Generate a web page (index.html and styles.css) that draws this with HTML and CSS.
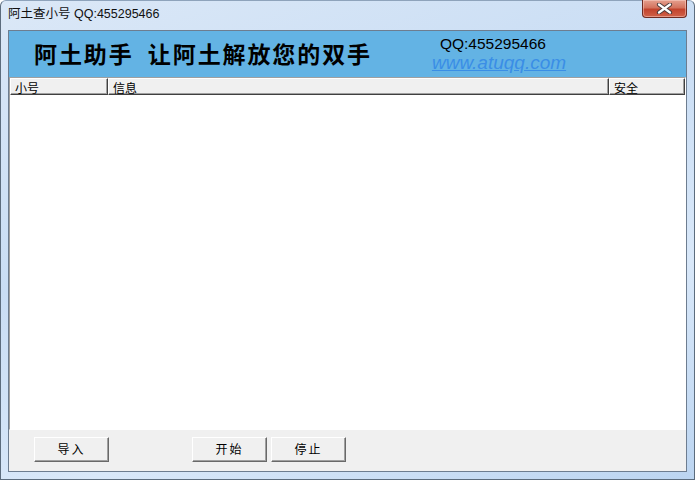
FILE: index.html
```html
<!DOCTYPE html>
<html lang="zh-cmn-Hans">
<head>
    <meta charset="UTF-8">
    <title>阿土查小号 QQ:455295466</title>
    <link rel="stylesheet" href="styles.css">
</head>
<body>
<div class="window">
    <div class="titlebar">
        <span class="title">阿土查小号 QQ:455295466</span>
        <a href="javascript:" class="btn-close">
            <svg width="17" height="11" viewBox="0 0 17 11">
                <path d="M3 1.5 L14 9.5 M14 1.5 L3 9.5" stroke="#4a3a3a" stroke-width="4.2" stroke-linecap="round"/>
                <path d="M3 1.5 L14 9.5 M14 1.5 L3 9.5" stroke="#fff" stroke-width="2.2" stroke-linecap="round"/>
            </svg>
        </a>
    </div>
    <div class="client">
        <div class="banner">
            <h1 class="banner-title">阿土助手&nbsp;&nbsp;让阿土解放您的双手</h1>
            <div class="contact">
                <div class="contact-qq">QQ:455295466</div>
                <a href="javascript:" class="contact-link">www.atuqq.com</a>
            </div>
        </div>
        <div class="list">
            <div class="list-head">
                <div class="list-col col-name">小号</div>
                <div class="list-col col-info">信息</div>
                <div class="list-col col-safe">安全</div>
            </div>
            <div class="list-body"></div>
        </div>
        <div class="footer">
            <a href="javascript:" class="btn btn-import">导入</a>
            <a href="javascript:" class="btn btn-start">开始</a>
            <a href="javascript:" class="btn">停止</a>
        </div>
    </div>
</div>
</body>
</html>
```

FILE: styles.css
```css
html, body {
    margin: 0;
    padding: 0;
    background: #fff;
}
body {
    font-family: "Noto Sans CJK SC", "Liberation Sans", sans-serif;
    font-size: 12px;
    color: #000;
}
a {
    text-decoration: none;
    color: inherit;
}
.window {
    width: 695px;
    height: 480px;
    box-sizing: border-box;
    display: flex;
    flex-direction: column;
    padding: 0 7px 7px 7px;
    background: linear-gradient(160deg, #dbe8f7 0%, #c9ddf4 40%, #d9e8f9 70%, #bcd5f1 100%);
    border: 1px solid #5c6c7d;
    border-top-color: #8ea3bb;
    border-radius: 6px 6px 0 0;
}
.titlebar {
    height: 29px;
    display: flex;
    justify-content: space-between;
    align-items: flex-start;
    flex-shrink: 0;
}
.title {
    margin-top: 5px;
    line-height: 16px;
    font-family: "Liberation Sans", "Noto Sans CJK SC", sans-serif;
    font-size: 12.5px;
    color: #111;
}
.btn-close {
    display: flex;
    align-items: center;
    justify-content: center;
    width: 43px;
    height: 17px;
    margin-top: -1px;
    border: 1px solid #6e2b22;
    border-top: none;
    border-radius: 0 0 4px 4px;
    background: linear-gradient(#e5a08f 0%, #d4735e 45%, #c2432d 55%, #d06249 100%);
    box-shadow: inset 0 0 0 1px rgba(255, 220, 210, .45);
}
.client {
    flex: 1;
    display: flex;
    flex-direction: column;
    background: #f0f0f0;
    border: 1px solid #6d7d90;
    min-height: 0;
}
.banner {
    height: 46px;
    flex-shrink: 0;
    display: flex;
    align-items: flex-start;
    background: #63b3e4;
    padding-left: 25px;
}
.banner-title {
    margin: 7px 0 0 0;
    font-size: 23px;
    line-height: 30px;
    font-weight: bold;
    letter-spacing: 1.9px;
    color: #000;
    white-space: nowrap;
}
.contact {
    margin-left: 60px;
    margin-top: 4px;
}
.contact-qq {
    padding-left: 8px;
    font-family: "Liberation Sans", sans-serif;
    font-size: 15.5px;
    line-height: 18px;
    color: #000;
}
.contact-link {
    display: block;
    font-family: "Liberation Sans", sans-serif;
    font-size: 19px;
    line-height: 20px;
    font-style: italic;
    color: #3a8ee6;
    text-decoration: underline;
}
.list {
    flex: 1;
    display: flex;
    flex-direction: column;
    min-height: 0;
    border-top: 1px solid #a0a0a0;
    border-left: 1px solid #a0a0a0;
    border-right: 1px solid #fff;
    border-bottom: 1px solid #fff;
}
.list-head {
    height: 17px;
    display: flex;
    flex-shrink: 0;
    background: #f0f0f0;
}
.list-col {
    box-sizing: border-box;
    height: 17px;
    line-height: 17px;
    padding-left: 4px;
    border-top: 1px solid #fff;
    border-left: 1px solid #fff;
    border-right: 1px solid #404040;
    border-bottom: 1px solid #404040;
    box-shadow: inset -1px -1px 0 #a0a0a0;
    font-size: 12px;
    overflow: hidden;
    flex-shrink: 0;
}
.col-name { width: 98px; }
.col-info { width: 501px; }
.col-safe { width: 76px; }
.list-body {
    flex: 1;
    background: #fff;
}
.footer {
    box-sizing: border-box;
    height: 41px;
    flex-shrink: 0;
    display: flex;
    align-items: flex-start;
    padding: 7px 0 0 25px;
}
.btn {
    box-sizing: border-box;
    width: 75px;
    height: 25px;
    line-height: 22px;
    text-align: center;
    font-size: 12px;
    letter-spacing: 2px;
    background: #f0f0f0;
    border-top: 1px solid #fff;
    border-left: 1px solid #fff;
    border-right: 1px solid #696969;
    border-bottom: 1px solid #696969;
    box-shadow: inset -1px -1px 0 #a0a0a0;
    margin-right: 4px;
}
.btn-import {
    margin-right: 83px;
}
```
